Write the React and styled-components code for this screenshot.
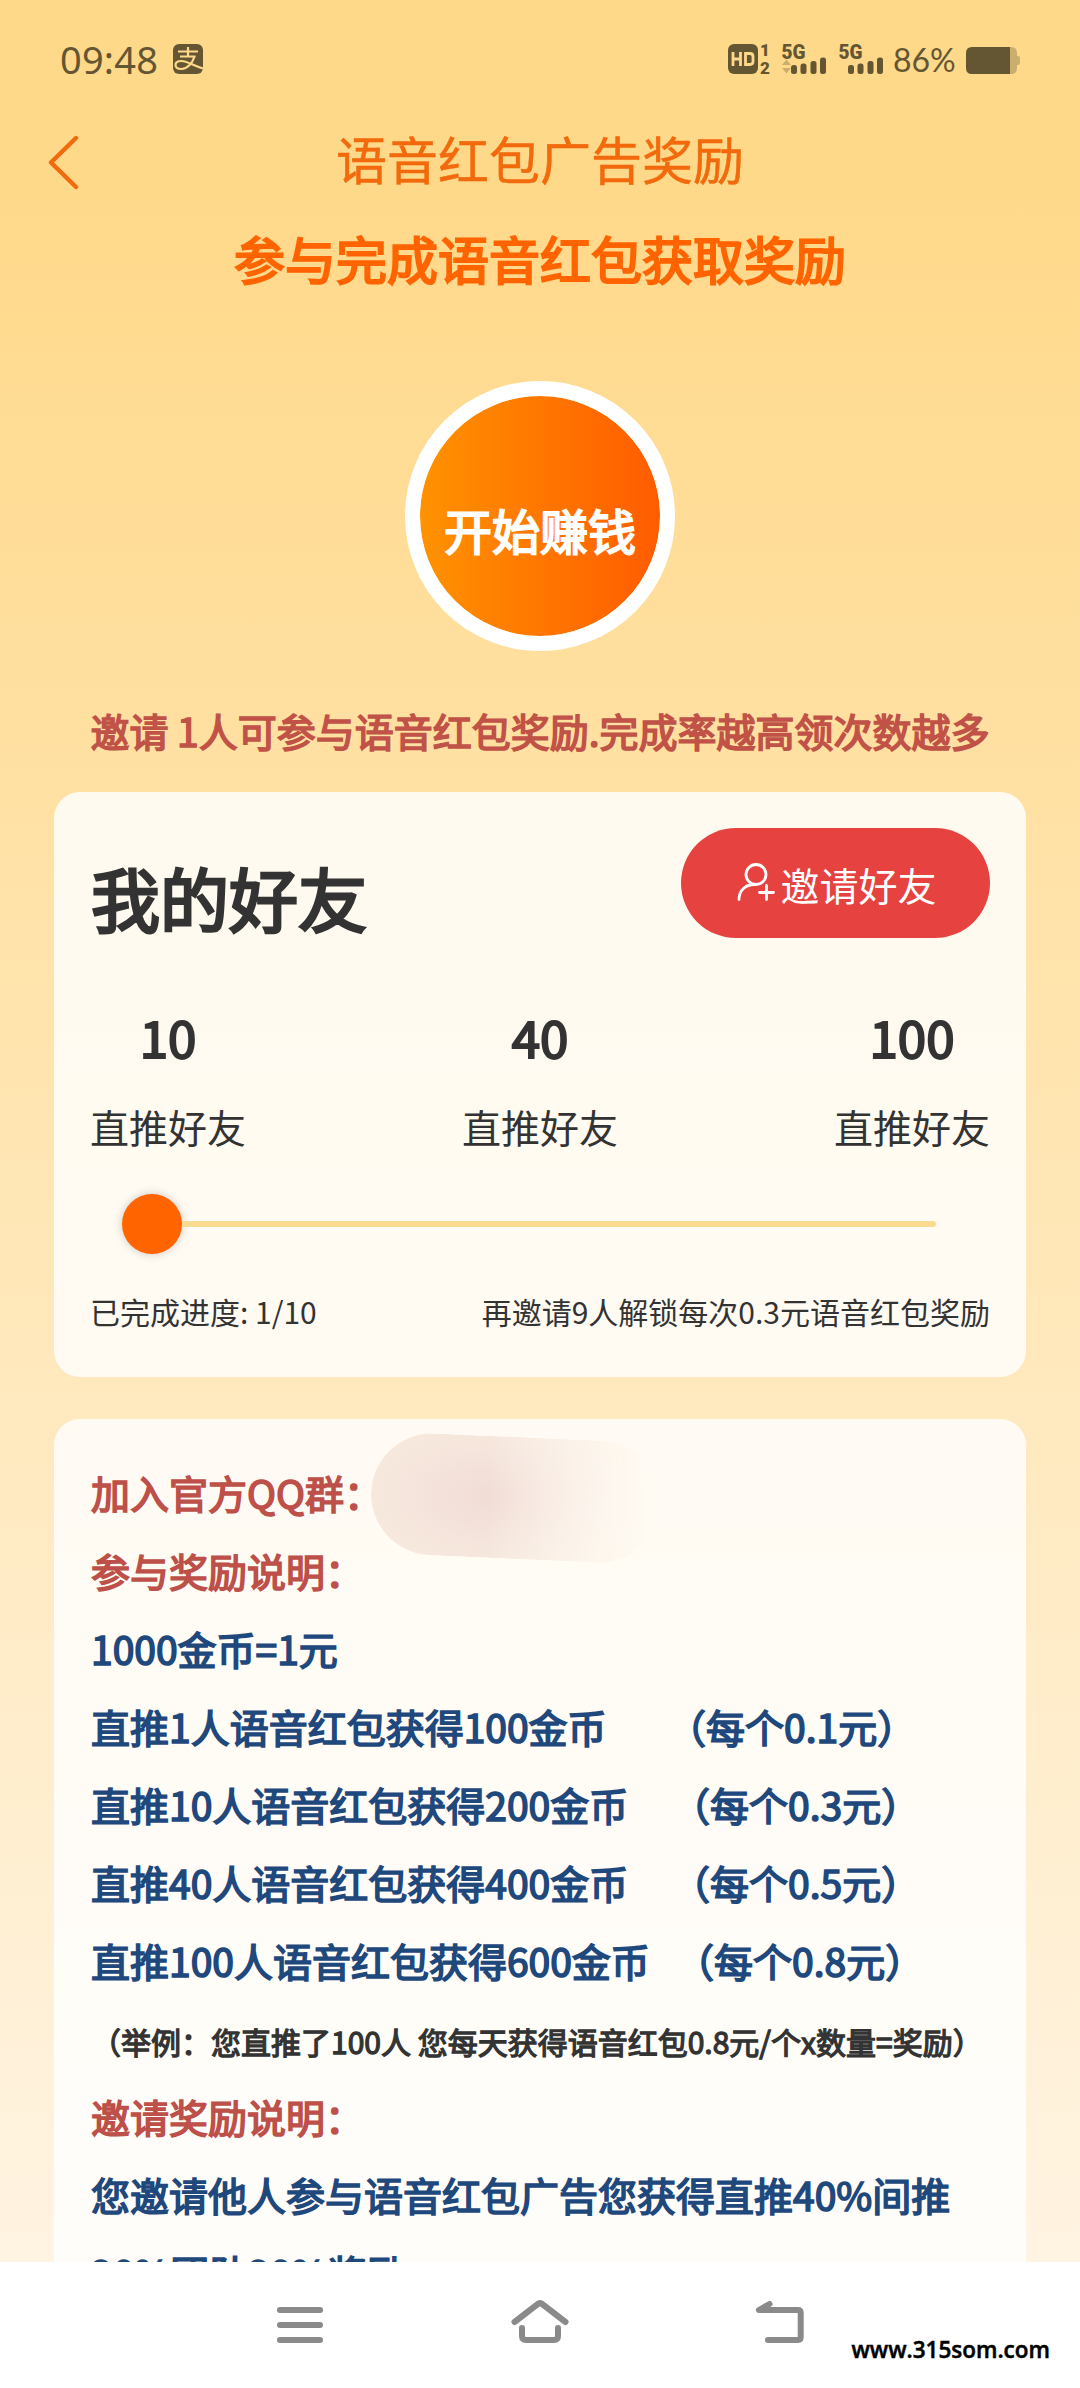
import React from 'react'
import styled, { createGlobalStyle, css } from 'styled-components';

const GlobalStyle = createGlobalStyle`
  * {
    box-sizing: border-box;
  }
  body {
    margin: 0;
    font-family: "Noto Sans CJK SC", sans-serif;
    color: #333333;
  }
`

const bolder = css`
  -webkit-text-stroke: 0.042em currentColor;
`

const Screen = styled.div`
  width: 1080px;
  height: 2388px;
  display: flex;
  flex-direction: column;
  overflow: hidden;
`

const Page = styled.main`
  height: 2262px;
  overflow: hidden;
  background: linear-gradient(180deg, #ffd98a 0%, #ffd98a 8%, #fff4e2 100%);
`

const StatusBar = styled.header`
  height: 110px;
  padding: 8px 60px 0 60px;
  display: flex;
  align-items: center;
  color: #655633;
  svg {
    display: block;
    overflow: visible;
  }
`

const Clock = styled.span`
  width: 113px;
  font-family: "Noto Sans", sans-serif;
  font-size: 38px;
  line-height: 50px;
  letter-spacing: 0.2px;
`

const StatusRight = styled.div`
  margin-left: auto;
  display: flex;
  align-items: center;
`

const Percent = styled.span`
  width: 63px;
  margin: 1px 10px 0 9px;
  font-family: Lato, sans-serif;
  font-size: 32px;
  line-height: 40px;
`

const TitleBar = styled.div`
  height: 102px;
  display: grid;
  grid-template-columns: 120px 1fr 120px;
  align-items: center;
  color: #f26a0c;
  font-size: 51px;
  line-height: 74px;
  text-align: center;
  svg {
    display: block;
    margin: 2px 0 0 46px;
  }
`

const Title = styled.span`
  margin-top: -6px;
  -webkit-text-stroke: 0.5px currentColor;
`

const Headline = styled.h1`
  ${bolder}
  margin: 9px 0 0;
  font-size: 51px;
  font-weight: 400;
  line-height: 74px;
  text-align: center;
  color: #ff6400;
`

const StartButton = styled.button`
  ${bolder}
  display: block;
  width: 270px;
  height: 270px;
  margin: 86px auto 0;
  padding: 26px 0 0;
  border: 15px solid #ffffff;
  border-radius: 50%;
  background: linear-gradient(90deg, #ff9200, #ff5c00) padding-box;
  color: #ffffff;
  font-family: inherit;
  font-size: 48px;
  line-height: 70px;
  white-space: nowrap;
`

const Notice = styled.p`
  ${bolder}
  margin: 50px 0 33px;
  font-size: 39px;
  line-height: 58px;
  text-align: center;
  white-space: nowrap;
  color: #c15247;
`

const Card = styled.section`
  margin: 0 54px 42px;
  padding: 36px;
  border-radius: 26px;
  background: rgba(255, 255, 255, 0.82);
`

const FriendsCard = styled(Card)`
  height: 585px;
`

const CardHead = styled.div`
  display: flex;
  justify-content: space-between;
  height: 171px;
`

const CardTitle = styled.h2`
  ${bolder}
  margin: 19px 0 0 1px;
  font-size: 69px;
  font-weight: 400;
  line-height: 100px;
`

const InviteButton = styled.button`
  display: flex;
  align-items: center;
  justify-content: center;
  width: 309px;
  height: 110px;
  padding: 2px 0 0 3px;
  border: none;
  border-radius: 55px;
  background: #e64340;
  color: #ffffff;
  font-family: inherit;
  font-size: 39px;
  line-height: 58px;
  svg {
    margin: -4px 5px 0 0;
  }
`

const Levels = styled.div`
  display: flex;
  justify-content: space-between;
`

const Level = styled.div`
  display: flex;
  flex-direction: column;
  align-items: center;
  font-size: 39px;
  line-height: 58px;
  strong {
    ${bolder}
    margin-bottom: 24px;
    font-size: 51px;
    font-weight: 400;
    line-height: 74px;
  }
`

const Slider = styled.div`
  display: flex;
  align-items: center;
  height: 60px;
  margin: 39px 54px 0 32px;
`

const Knob = styled.span`
  flex: none;
  width: 60px;
  height: 60px;
  border-radius: 50%;
  background: #ff6400;
  box-shadow: 0 0 10px rgba(0, 0, 0, 0.2);
`

const Track = styled.span`
  flex: 1;
  height: 6px;
  border-radius: 0 3px 3px 0;
  background: #f9db90;
`

const Progress = styled.div`
  display: flex;
  justify-content: space-between;
  margin-top: 35px;
  font-size: 30px;
  line-height: 44px;
`

const RulesCard = styled(Card)`
  height: 1000px;
  padding: 34px 35px 0 37px;
`

const tones = {
  red: '#bd5049',
  blue: '#1f487c',
  dark: '#333333',
}

const Rule = styled.p`
  ${bolder}
  display: flex;
  margin: 0;
  height: 78px;
  font-size: ${({ $small }) => ($small ? 30 : 39)}px;
  line-height: ${({ $small }) => ($small ? 84 : 78)}px;
  white-space: pre;
  color: ${({ $tone }) => tones[$tone]};
`

const Reward = styled.span`
  width: ${({ $width }) => $width}px;
`

const Smudge = styled.span`
  width: 290px;
  height: 122px;
  margin: -16px 0 0 -12px;
  border-radius: 62px;
  background: radial-gradient(ellipse 170px 95px at 42% 50%, #f1dcd5 0%, #f5e5dc 50%, #f9ecde 100%);
  transform: rotate(2.5deg);
  mask-image: linear-gradient(90deg, #000 40%, rgba(0, 0, 0, 0.35) 75%, transparent 100%);
`

const NavBar = styled.footer`
  position: relative;
  height: 126px;
  display: flex;
  justify-content: center;
  gap: 180px;
  padding-top: 33px;
  background: #ffffff;
`

const Watermark = styled.span`
  position: absolute;
  right: 30px;
  bottom: 24px;
  font-family: "Open Sans", sans-serif;
  font-size: 22.5px;
  font-weight: 600;
  line-height: 28px;
  color: #000000;
  -webkit-text-stroke: 0.5px currentColor;
`

const rewards = [
  { text: '直推1人语音红包获得100金币', price: '（每个0.1元）', width: 576 },
  { text: '直推10人语音红包获得200金币', price: '（每个0.3元）', width: 580 },
  { text: '直推40人语音红包获得400金币', price: '（每个0.5元）', width: 580 },
  { text: '直推100人语音红包获得600金币', price: '（每个0.8元）', width: 584 },
]

function PayIcon() {
  return (
    <svg width="30" height="30" viewBox="0 0 30 30" fill="none">
      <rect width="30" height="30" rx="6" fill="#655633" />
      <g stroke="#ffd98a" strokeWidth="2.2">
        <path d="M5 7.5h20M15 3v9M7 12.5h15.5" />
        <path d="M21.5 12.5C19.5 19 14 25 8.5 25C4 25 2.5 23 2.5 21C2.5 18.500 5 17 8.500 17C14 17 20 21.500 30 24.500" />
      </g>
    </svg>
  )
}

function HdIcon() {
  return (
    <svg width="42" height="32" viewBox="0 0 42 32" fill="none">
      <rect y="1" width="30" height="30" rx="6" fill="#655633" />
      <path d="M5 9v14M12.500 9v14M5 16h7.500M17.500 10.500h4.500q3 0 3 3v5q0 3-3 3h-4.500z" stroke="#ffd98a" strokeWidth="2.800" />
      <g fill="#655633" fontFamily="Roboto" fontWeight="900" fontSize="17">
        <text x="32" y="13">1</text>
        <text x="32" y="31">2</text>
      </g>
    </svg>
  )
}

function SignalIcon({ arrows }) {
  return (
    <svg width="57" height="32" viewBox="0 0 57 32" fill="#655633">
      <text x="11.500" y="15.500" fontFamily="Roboto" fontWeight="900" fontSize="20" textLength="24" lengthAdjust="spacingAndGlyphs">5G</text>
      {arrows && <path d="M12 22l4.500-5.500 4.500 5.500zM12 25l4.500 5.500 4.500-5.500z" fill="#c9ae6e" />}
      <rect x="21" y="22" width="6" height="9" rx="2.500" />
      <rect x="30.500" y="20.500" width="6" height="10.500" rx="2.500" />
      <rect x="40.500" y="18" width="6" height="13" rx="2.500" />
      <rect x="50" y="14.500" width="6" height="16.500" rx="2.500" />
    </svg>
  )
}

function BatteryIcon() {
  return (
    <svg width="54" height="30" viewBox="0 -3 54 30">
      <path d="M43 0h2q6 0 6 6v3h1q2 0 2 2v5q0 2-2 2h-1v3q0 6-6 6h-2z" fill="#c9ae6e" />
      <path d="M6 0h38v27H6q-6 0-6-6V6q0-6 6-6z" fill="#655633" />
    </svg>
  )
}

export default function App() {
  return (
    <Screen>
      <GlobalStyle />
      <Page>
        <StatusBar>
          <Clock>09:48</Clock>
          <PayIcon />
          <StatusRight>
            <HdIcon />
            <SignalIcon arrows />
            <SignalIcon />
            <Percent>86%</Percent>
            <BatteryIcon />
          </StatusRight>
        </StatusBar>
        <TitleBar>
          <svg width="36" height="56" viewBox="0 0 36 56" fill="none" stroke="#f26a0c" strokeWidth="4.400" strokeLinecap="round" strokeLinejoin="round">
            <path d="M30 4L5 28.500L30 53" />
          </svg>
          <Title>语音红包广告奖励</Title>
        </TitleBar>
        <Headline>参与完成语音红包获取奖励</Headline>
        <StartButton>开始赚钱</StartButton>
        <Notice>邀请 1人可参与语音红包奖励.完成率越高领次数越多</Notice>
        <FriendsCard>
          <CardHead>
            <CardTitle>我的好友</CardTitle>
            <InviteButton>
              <svg width="38" height="38" viewBox="0 0 38 38" fill="none" stroke="#ffffff" strokeWidth="2.800" strokeLinecap="round">
                <circle cx="19" cy="11.500" r="10" />
                <path d="M2 36.500C2 27 9 21.500 17 21.500M29.500 22.500v14M22.500 29.500h14" />
              </svg>
              邀请好友
            </InviteButton>
          </CardHead>
          <Levels>
            {[10, 40, 100].map((count) => (
              <Level key={count}>
                <strong>{count}</strong>
                <span>直推好友</span>
              </Level>
            ))}
          </Levels>
          <Slider>
            <Knob />
            <Track />
          </Slider>
          <Progress>
            <span>已完成进度: 1/10</span>
            <span>再邀请9人解锁每次0.3元语音红包奖励</span>
          </Progress>
        </FriendsCard>
        <RulesCard>
          <Rule $tone="red">加入官方QQ群：<Smudge /></Rule>
          <Rule $tone="red">参与奖励说明：</Rule>
          <Rule $tone="blue">1000金币=1元</Rule>
          {rewards.map((reward) => (
            <Rule key={reward.text} $tone="blue">
              <Reward $width={reward.width}>{reward.text}</Reward>
              <span>{reward.price}</span>
            </Rule>
          ))}
          <Rule $tone="dark" $small>（举例：您直推了100人 您每天获得语音红包0.8元/个x数量=奖励）</Rule>
          <Rule $tone="red">邀请奖励说明：</Rule>
          <Rule $tone="blue">您邀请他人参与语音红包广告您获得直推40%间推</Rule>
          <Rule $tone="blue">20%团队20%奖励</Rule>
        </RulesCard>
      </Page>
      <NavBar>
        <svg width="60" height="60" viewBox="0 0 60 60" fill="none" stroke="#8a8a8a" strokeWidth="6" strokeLinecap="round">
          <path d="M10 15h40M10 30h40M10 45h40" />
        </svg>
        <svg width="60" height="60" viewBox="0 0 60 60" fill="none" stroke="#8a8a8a" strokeWidth="6" strokeLinecap="round" strokeLinejoin="round">
          <path d="M4.500 27L28.500 8.500q1.500-1 3 0L55.500 27M12 33v8q0 4 4 4h28q4 0 4-4v-8" />
        </svg>
        <svg width="60" height="60" viewBox="0 0 60 60" fill="none" stroke="#8a8a8a" strokeWidth="6" strokeLinecap="round" strokeLinejoin="round">
          <path d="M19.500 9L9 15H48q2.700 0 2.700 2.700v24.600q0 2.700-2.700 2.700H18" />
        </svg>
        <Watermark>www.315som.com</Watermark>
      </NavBar>
    </Screen>
  )
}
